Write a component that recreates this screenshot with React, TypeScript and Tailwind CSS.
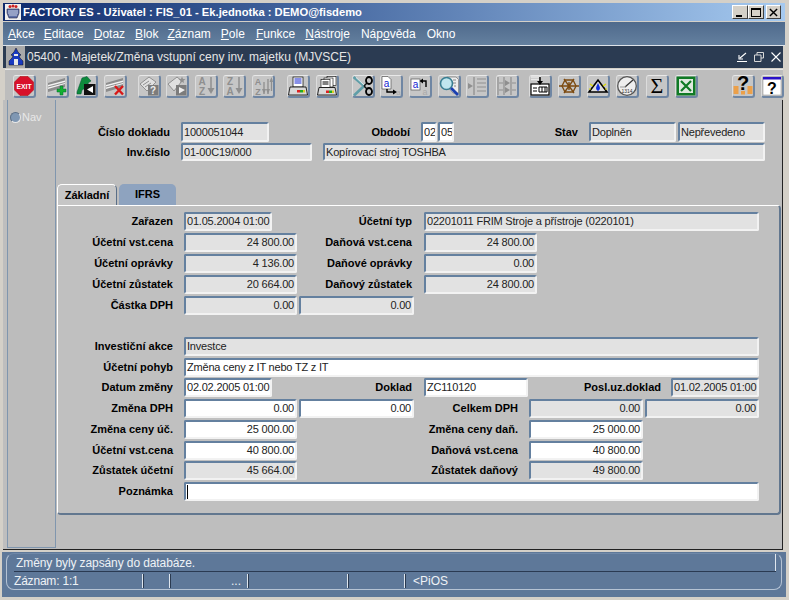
import React from "react";

const T = ({ x, y, s = 7, c = "#000", b = false, f = "Liberation Sans, sans-serif", children }: any) => (
  <text x={x} y={y} fontSize={s} fill={c} fontWeight={b ? 700 : 400} fontFamily={f} textAnchor="middle">{children}</text>
);
const G = "#8f8f8f";
const rail = (
  <g>
    <path d="M1 7 L18 2 V11 L1 16 Z" fill="#8c8c8c" />
    <path d="M1 9 L18 4.500 V8 L1 13 Z" fill="#f2f2f2" />
    <path d="M1 11 L18 6.500" stroke="#777" strokeWidth="0.8" />
  </g>
);
const icons: Record<string, React.ReactNode> = {
  exit: (<g><path d="M6 0.500 H14 L19.500 6 V14 L14 19.500 H6 L0.500 14 V6 Z" fill="#d8102a" stroke="#a00" strokeWidth="0.5" /><T x={10} y={12.500} s={6.800} c="#fff" b>EXIT</T></g>),
  add: (<g>{rail}<path d="M13 10 H16 V13 H19 V16 H16 V19 H13 V16 H10 V13 H13 Z" fill="#12b030" stroke="#063" strokeWidth="0.5" /></g>),
  tree: (<g><path d="M1 16 L6 2 L11 0.500 L15 5 L12 7 L13 10 L6 14 L5 18 L1 18 Z" fill="#0d8a3c" stroke="#053" strokeWidth="0.5" /><rect x="8" y="8" width="11.500" height="11" fill="#111" /><path d="M11 13.500 L17 10 V17 Z" fill="#fff" /></g>),
  del: (<g>{rail}<path d="M10 10 L18 18.500 M18 10 L10 18.500" stroke="#d81818" strokeWidth="2.400" /></g>),
  qdoc: (<g><path d="M1 8 L10 1 L17 6 L8 15 Z" fill="#e0e0e0" stroke={G} /><path d="M4 9 L10 5 M6 11 L12 7" stroke={G} /><rect x="9" y="9" width="10.500" height="10.500" fill="#7c7c7c" /><T x={14} y={18} s={10} c="#eee" b>?</T></g>),
  playdoc: (<g><path d="M1 8 L10 1 L15 5 L7 15 Z" fill="#e0e0e0" stroke={G} /><path d="M15 0.500 L16 3 L18.500 3 L16.500 4.800 L17 7 L15 5.800 L13 7 L13.500 4.800 L11.500 3 L14 3 Z" fill={G} /><rect x="9" y="9" width="10.500" height="10.500" fill="#7c7c7c" /><path d="M12 11 L18 14 L12 17.500 Z" fill="#eee" /></g>),
  az: (<g><T x={6} y={9} s={10} c={G} b>A</T><T x={6} y={19} s={10} c={G} b>Z</T><path d="M15 1 V13" stroke={G} strokeWidth="1.500" /><path d="M11.500 12 H18.500 L15 18 Z" fill={G} /></g>),
  za: (<g><T x={6} y={9} s={10} c={G} b>Z</T><T x={6} y={19} s={10} c={G} b>A</T><path d="M15 1 V13" stroke={G} strokeWidth="1.500" /><path d="M11.500 12 H18.500 L15 18 Z" fill={G} /></g>),
  azm: (<g><T x={5} y={9} s={9} c={G} b>A</T><T x={5} y={19} s={9} c={G} b>Z</T><path d="M11 6 V18 M15 3 V18 M18.500 3 V15" stroke={G} strokeWidth="1.300" /><path d="M9 13 H13 L11 18 Z M13 13 H17 L15 18 Z M16.500 6 H20 L18.500 1 Z" fill={G} /></g>),
  print: (<g><rect x="5" y="1" width="10" height="10" fill="#fff" stroke="#000" strokeWidth="0.700" /><path d="M6.500 3 H13.500 M6.500 5 H13.500 M6.500 7 H13.500" stroke="#1020d0" /><path d="M2 11 H18 L19.500 19 H0.500 Z" fill="#d8d8d8" stroke="#000" strokeWidth="0.800" /><rect x="9" y="14" width="3" height="2.500" fill="#d22" /><rect x="12" y="14" width="3" height="2.500" fill="#2a2" /><rect x="15" y="14" width="2" height="2.500" fill="#dc2" /></g>),
  print2: (<g><rect x="10" y="0.500" width="9" height="9" fill="#fff" stroke="#000" strokeWidth="0.600" /><rect x="7" y="2" width="9" height="9" fill="#fff" stroke="#000" strokeWidth="0.600" /><rect x="4" y="3.500" width="9" height="8" fill="#fff" stroke="#000" strokeWidth="0.600" /><path d="M5.500 6 H11.500 M5.500 8 H11.500" stroke="#000" /><path d="M2 11.500 H18 L19.500 19 H0.500 Z" fill="#d8d8d8" stroke="#000" strokeWidth="0.800" /><rect x="9" y="14.500" width="3" height="2.500" fill="#d22" /><rect x="12" y="14.500" width="3" height="2.500" fill="#2a2" /><rect x="15" y="14.500" width="2" height="2.500" fill="#dc2" /></g>),
  cut: (<g><path d="M0.500 1 L11 10 L1 19.500" fill="none" stroke="#5f9ea8" strokeWidth="2.600" /><path d="M3 1.500 L11 9" stroke="#fff" strokeWidth="0.800" /><path d="M11 10 L14 7 M11 10 L14 13" stroke="#111" strokeWidth="1.500" /><ellipse cx="16" cy="4.500" rx="3" ry="3.500" fill="none" stroke="#000" strokeWidth="1.800" /><ellipse cx="16" cy="15.500" rx="3" ry="3.500" fill="none" stroke="#000" strokeWidth="1.800" /></g>),
  copya: (<g><path d="M1 0.500 H7 L10 3.500 V13 H1 Z" fill="#fff" stroke="#555" strokeWidth="0.700" /><T x={5.500} y={11} s={10} c="#1020d0">a</T><path d="M6 13 V16 H13" fill="none" stroke="#000" strokeWidth="1.400" /><path d="M12 13.500 L16 16 L12 18.500 Z" fill="#000" /><T x={17.500} y={19} s={8} c="#aaa">a</T></g>),
  repla: (<g><rect x="1" y="3" width="9" height="11" fill="#fff" stroke="#555" strokeWidth="0.700" /><T x={5.500} y={12} s={10} c="#1020d0">a</T><path d="M16 11 V5 H12" fill="none" stroke="#000" strokeWidth="1.400" /><path d="M13 2.500 L9.500 5 L13 7.500 Z" fill="#000" /><T x={15} y={19} s={9} c="#aaa">a</T></g>),
  find: (<g><path d="M8 1 H17 L19.500 3.500 V17 H14 L8 10 Z" fill="#ededed" stroke="#777" strokeWidth="0.700" /><path d="M14 4 H17 M14 7 H17 M15 10 H17" stroke="#888" /><circle cx="7.500" cy="7.500" r="6" fill="#bfe6ee" stroke="#3a7f92" strokeWidth="1.600" /><path d="M12 12 L19 19" stroke="#1a3fb0" strokeWidth="2.800" /></g>),
  ind: (<g><path d="M7 1 V19" stroke={G} strokeWidth="1.300" /><path d="M1 7 L6 10 L1 13 Z" fill={G} /><path d="M10 3 H19 M10 7 H19 M10 11 H19 M10 15 H19" stroke={G} strokeWidth="1.200" /></g>),
  ind2: (<g><path d="M1 1 V19 M7 1 V19 M14 1 V19" stroke={G} strokeWidth="1.200" /><path d="M8 4 L13 7 L8 10 Z M8 11 L13 14 L8 17 Z" fill={G} /><path d="M2 7 H6 M2 14 H6 M15 7 H19 M15 14 H19" stroke={G} strokeWidth="1.200" /></g>),
  form: (<g><path d="M1 1 H11 M1 3.500 H9" stroke="#e8e8e8" strokeWidth="1.500" /><rect x="1" y="8" width="18" height="11" fill="#fff" stroke="#000" strokeWidth="1.200" /><path d="M3 12 H7 M3 15 H7 M9 11 H17 V16 H9 Z M12 11 V16 M15 11 V16" stroke="#000" fill="none" /><path d="M10 1 V6" stroke="#000" strokeWidth="1.500" /><path d="M7 5 H13 L10 9 Z" fill="#000" /></g>),
  wheel: (<g stroke="#7c4a10" fill="none"><path d="M6 4 H14 L17 10 L14 16 H6 L3 10 Z" strokeWidth="1.300" /><path d="M0 10 H20 M5 3 L15 17 M15 3 L5 17 M10 6 V14" strokeWidth="1.300" /></g>),
  tent: (<g><path d="M1 16 L10 4 L19 16 Z" fill="#ddd" stroke="#000" strokeWidth="1.600" /><path d="M10 7 C8 11 7 13 10 15 C13 13 12 11 10 7Z" fill="#1030e0" /><path d="M2 8 L5 10 M18 8 L15 10 M1 13 L3 13 M17 13 L19 13" stroke="#dd0" strokeWidth="1.200" /></g>),
  gauge: (<g><circle cx="10" cy="10" r="9.300" fill="#eee" stroke="#555" strokeWidth="1.300" /><path d="M8 11 L16 4" stroke="#333" strokeWidth="1.200" /><path d="M3 11 H9" stroke="#999" /><T x={10} y={16.500} s={5} c="#333">1314</T></g>),
  sigma: (<T x={10} y={17} s={22} c="#000" f="Liberation Serif, serif">Σ</T>),
  excel: (<g><rect x="0.500" y="0.500" width="19" height="19" fill="#0f7a25" /><rect x="3" y="3" width="14" height="14" fill="#dfe9df" /><path d="M5 5 L15 15 M15 5 L5 15" stroke="#0f7a25" strokeWidth="2.200" /></g>),
  help: (<g><T x={10} y={14} s={20} c="#000" b>?</T><rect x="0.500" y="10" width="5" height="8" fill="#eba04a" /><rect x="14.500" y="10" width="5" height="8" fill="#eba04a" /><rect x="8" y="15" width="4" height="3.500" fill="#eba04a" /></g>),
  help2: (<g><rect x="1" y="1" width="18" height="18" fill="#fff" stroke="#888" strokeWidth="0.500" /><rect x="1" y="1" width="18" height="2.500" fill="#2a10c8" /><T x={10} y={17.500} s={16} c="#000" b>?</T></g>),
};

const tools: [string, string][] = [
  ["exit", "ml-[8px]"], ["add", "ml-[10px]"], ["tree", "ml-[6px]"], ["del", "ml-[6px]"], ["qdoc", "ml-[11px]"], ["playdoc", "ml-[5px]"],
  ["az", "ml-[6px]"], ["za", "ml-[5px]"], ["azm", "ml-[6px]"], ["print", "ml-[12px]"], ["print2", "ml-[6px]"], ["cut", "ml-[13px]"],
  ["copya", "ml-[5px]"], ["repla", "ml-[6px]"], ["find", "ml-[6px]"], ["ind", "ml-[5px]"], ["ind2", "ml-[7px]"], ["form", "ml-[10px]"],
  ["wheel", "ml-[6px]"], ["tent", "ml-[6px]"], ["gauge", "ml-[6px]"], ["sigma", "ml-[7px]"], ["excel", "ml-[6px]"], ["help", "ml-[34px]"], ["help2", "ml-[6px]"],
];

const Tool = ({ name, cls }: { name: string; cls: string }) => (
  <div className={`${cls} w-[23px] h-[23px] shrink-0 flex items-center justify-center rounded-[3px] bg-[#c6c6c6] border border-t-[#e8e8e8] border-l-[#dcdcdc] border-r-2 border-b-2 border-r-[#6f86a3] border-b-[#6f86a3]`}>
    <svg viewBox="0 0 20 20" className="w-[20px] h-[20px] shrink-0 overflow-visible">{icons[name]}</svg>
  </div>
);

const Field = ({ w, v, white, right, h = "h-[19px]", children }: any) => (
  <div className={`${w} ${h} shrink-0 flex items-center overflow-hidden whitespace-nowrap rounded-[2px] border-t-2 border-l-2 border-t-[#64809f] border-l-[#64809f] border-r-2 border-b-2 border-r-[#f2f2f2] border-b-[#f2f2f2] text-[11px] tracking-[-0.2px] leading-none text-[#222] ${white ? "bg-white" : "bg-[#e2e2e2]"} ${right ? "justify-end pr-[1px]" : "pl-[1px]"}`}>
    {v}{children}
  </div>
);

const Label = ({ w, children }: any) => (
  <div className={`${w} shrink-0 pr-[2px] text-right font-bold text-[11px] leading-none text-black whitespace-nowrap`}>{children}</div>
);

const MenuItem = ({ u, rest, pre = "", cls }: any) => (
  <span className={cls}>{pre}<span className="underline">{u}</span>{rest}</span>
);

const Sep = ({ cls }: { cls: string }) => <div className={`${cls} w-[2px] h-[14px] bg-[#dfe6ee] border-r border-[#2b3a50] shrink-0`} />;

export default function App() {
  return (
    <div className="w-[789px] h-[600px] overflow-hidden bg-[#d4d0c8] flex flex-col pt-[3px] pl-[3px] pr-[4px] font-['Liberation_Sans',Arial,sans-serif] relative">
      {/* App title bar */}
      <div className="h-[18px] shrink-0 flex items-center bg-linear-to-r from-[#0f2a6c] to-[#a6caf0] text-white font-bold text-[11.2px] pl-[2px]">
        <svg viewBox="0 0 16 16" className="w-[16px] h-[16px] shrink-0 mr-[2px]">
          <rect width="16" height="16" fill="#f0f0f0" />
          <path d="M2 5 H14 V9 L12 14 H4 L2 9 Z" fill="#5d6fa8" stroke="#224" strokeWidth="0.600" />
          <path d="M3 7 H13 M3 9 H13 M4 11 H12" stroke="#fff" strokeWidth="0.700" />
          <circle cx="5" cy="2.500" r="1.500" fill="#c22" /><circle cx="8" cy="2" r="1.500" fill="#c22" /><circle cx="11" cy="2.500" r="1.500" fill="#c22" />
        </svg>
        <span className="whitespace-nowrap">FACTORY ES - Uživatel : FIS_01 - Ek.jednotka : DEMO@fisdemo</span>
        <div className="ml-auto flex mr-[4px]">
          {[0, 1].map((i) => (
            <div key={i} className="w-[16px] h-[14px] bg-[#d4d0c8] border border-t-white border-l-white border-r-[#404040] border-b-[#404040] flex items-center justify-center">
              {i === 0 ? <div className="w-[6px] h-[2px] bg-black mt-[7px] -ml-[2px]" /> : <div className="w-[10px] h-[9px] border border-black border-t-2" />}
            </div>
          ))}
          <div className="ml-[2px] w-[15px] h-[14px] bg-[#d4d0c8] border border-t-white border-l-white border-r-[#404040] border-b-[#404040] flex items-center justify-center">
            <svg viewBox="0 0 10 10" className="w-[9px] h-[9px]"><path d="M1 1 L9 9 M9 1 L1 9" stroke="#000" strokeWidth="1.600" /></svg>
          </div>
        </div>
      </div>
      {/* Menu */}
      <div className="mt-[1px] h-[24px] shrink-0 flex items-center bg-linear-to-b from-[#4f6a8c] to-[#64809f] border-b border-[#dde3ea] text-[12px] text-white whitespace-nowrap pl-[5px]">
        <MenuItem u="A" rest="kce" />
        <MenuItem u="E" rest="ditace" cls="ml-[9px]" />
        <MenuItem u="D" rest="otaz" cls="ml-[10px]" />
        <MenuItem u="B" rest="lok" cls="ml-[10px]" />
        <MenuItem u="Z" rest="áznam" cls="ml-[9px]" />
        <MenuItem u="P" rest="ole" cls="ml-[10px]" />
        <MenuItem u="F" rest="unkce" cls="ml-[11px]" />
        <MenuItem u="N" rest="ástroje" cls="ml-[10px]" />
        <MenuItem pre="Náp" u="o" rest="věda" cls="ml-[11px]" />
        <span className="ml-[11px]">Okno</span>
      </div>
      {/* Inner window */}
      <div className="flex-1 min-h-0 flex flex-col pr-[2px]">
        <div className="h-[22px] shrink-0 flex items-center bg-[#2b3b52] text-[#e6e6e6] text-[12px] whitespace-nowrap">
          <div className="w-[19px] h-[22px] ml-[3px] bg-[#a9a9a9] shrink-0 flex items-center justify-center">
            <svg viewBox="0 0 18 20" className="w-[18px] h-[20px]">
              <path d="M9 1 L11 5 L14 8 L12 9 L13 11 L16 14 V18 H2 V14 L5 11 L6 9 L4 8 L7 5 Z" fill="#1a3ac0" stroke="#111" strokeWidth="0.500" />
              <rect x="7" y="12" width="4" height="6" fill="#e8e8e8" /><rect x="7" y="7" width="4" height="2" fill="#e8e8e8" />
            </svg>
          </div>
          <span className="ml-[2px]">05400 - Majetek/Změna vstupní ceny inv. majetku (MJVSCE)</span>
          <div className="ml-auto flex items-center mr-[2px] gap-[7px]">
            <svg viewBox="0 0 10 10" className="w-[10px] h-[10px]"><path d="M9 1 L3 6 M2 3 V7 H6 M0 9.500 H10" stroke="#fff" fill="none" strokeWidth="1.100" /></svg>
            <svg viewBox="0 0 10 10" className="w-[10px] h-[10px]"><path d="M3 3 V0.500 H9.500 V6 H7 M0.500 3 H7 V9.500 H0.500 Z" stroke="#d8d8d8" fill="none" /></svg>
            <svg viewBox="0 0 10 10" className="w-[10px] h-[10px]"><path d="M0.500 0.500 L9.500 9.500 M9.500 0.500 L0.500 9.500" stroke="#fff" strokeWidth="1.100" /></svg>
          </div>
        </div>
        {/* Toolbar */}
        <div className="h-[31px] mt-[1px] shrink-0 flex items-start pt-[5px] bg-[#bdbdbd] border-t border-[#e6e6e6] ml-[2px]">
          {tools.map(([n, c]) => <Tool key={n} name={n} cls={c} />)}
        </div>
        {/* Body */}
        <div className="h-[450px] shrink-0 flex bg-[#bebebe] border-r border-b border-[#222] pl-[4px]">
          <div className="w-[49px] h-[448px] shrink-0 bg-[#bcbcbc] border-l border-r border-b border-[#8096ae] pt-[11px] pl-[2px] flex items-start">
            <div className="w-[11px] h-[11px] rounded-full bg-[#7f97b3] border border-[#5c6f86] border-b-[#e8e8e8] border-r-[#e8e8e8] mt-[1px]" />
            <span className="ml-[1px] text-[11px] leading-[13px] text-[#e8e8e8]">Nav</span>
          </div>
          <div className="flex-1 min-w-0 flex flex-col">
            {/* Header */}
            <div className="h-[84px] shrink-0 pt-[22px] flex flex-col">
              <div className="flex items-center">
                <Label w="w-[116px]">Číslo dokladu</Label>
                <div className="ml-[9px]"><Field w="w-[88px]" h="h-[20px]" v="1000051044" /></div>
                <Label w="w-[143px]">Období</Label>
                <div className="ml-[9px] flex gap-[1px]">
                  <Field w="w-[16px]" h="h-[20px]" white v="02" />
                  <Field w="w-[16px]" h="h-[20px]" white v="05" />
                </div>
                <Label w="w-[126px]">Stav</Label>
                <div className="ml-[9px] flex gap-[2px]">
                  <Field w="w-[87px]" h="h-[20px]" v="Doplněn" />
                  <Field w="w-[87px]" h="h-[20px]" v="Nepřevedeno" />
                </div>
              </div>
              <div className="flex items-center mt-[1px]">
                <Label w="w-[116px]">Inv.číslo</Label>
                <div className="ml-[9px]"><Field w="w-[131px]" h="h-[18px]" v="01-00C19/000" /></div>
                <div className="ml-[11px]"><Field w="w-[442px]" h="h-[18px]" v="Kopírovací stroj TOSHBA" /></div>
              </div>
            </div>
            {/* Tabs */}
            <div className="h-[21px] shrink-0 flex items-end ml-[1px]">
              <div className="w-[60px] h-[21px] rounded-t-[5px] border-t border-l border-white border-r border-r-[#5a6f88] bg-[#c6c6c6] flex items-center justify-center font-bold text-[11px] text-black">Základní</div>
              <div className="ml-[2px] w-[57px] h-[21px] rounded-t-[5px] bg-[#8ea3bf] flex items-center justify-center font-bold text-[11px] text-black">IFRS</div>
            </div>
            {/* Panel */}
            <div className="h-[310px] w-[724px] ml-[1px] shrink-0 rounded-b-[4px] rounded-tr-[4px] bg-[#c0c0c0] border-t border-l border-white border-r-2 border-b-2 border-r-[#62778f] border-b-[#62778f] pt-[6px] flex flex-col">
              {/* Top block */}
              <div className="flex flex-col gap-[2px]">
                <div className="flex items-center">
                  <Label w="w-[117px]">Zařazen</Label>
                  <div className="ml-[9px]"><Field w="w-[88px]" v="01.05.2004 01:00:" /></div>
                  <Label w="w-[142px]">Účetní typ</Label>
                  <div className="ml-[10px]"><Field w="w-[335px]" v="02201011 FRIM Stroje a přístroje (0220101)" /></div>
                </div>
                {[["Účetní vst.cena", "24 800.00", "Daňová vst.cena", "24 800.00"], ["Účetní oprávky", "4 136.00", "Daňové oprávky", "0.00"], ["Účetní zůstatek", "20 664.00", "Daňový zůstatek", "24 800.00"]].map((r) => (
                  <div key={r[0]} className="flex items-center">
                    <Label w="w-[117px]">{r[0]}</Label>
                    <div className="ml-[9px]"><Field w="w-[113px]" right v={r[1]} /></div>
                    <Label w="w-[117px]">{r[2]}</Label>
                    <div className="ml-[10px]"><Field w="w-[113px]" right v={r[3]} /></div>
                  </div>
                ))}
                <div className="flex items-center">
                  <Label w="w-[117px]">Částka DPH</Label>
                  <div className="ml-[9px] flex gap-[2px]">
                    <Field w="w-[113px]" right v="0.00" />
                    <Field w="w-[115px]" right v="0.00" />
                  </div>
                </div>
              </div>
              {/* Bottom block */}
              <div className="mt-[22px] flex flex-col">
                <div className="flex items-center">
                  <Label w="w-[117px]">Investiční akce</Label>
                  <div className="ml-[9px]"><Field w="w-[575px]" v="Investce" /></div>
                </div>
                <div className="flex items-center mt-[2px]">
                  <Label w="w-[117px]">Účetní pohyb</Label>
                  <div className="ml-[9px]"><Field w="w-[575px]" white v="Změna ceny z IT nebo TZ z IT" /></div>
                </div>
                <div className="flex items-center mt-[1px]">
                  <Label w="w-[117px]">Datum změny</Label>
                  <div className="ml-[9px]"><Field w="w-[88px]" white v="02.02.2005 01:00:" /></div>
                  <Label w="w-[142px]">Doklad</Label>
                  <div className="ml-[10px]"><Field w="w-[104px]" white v="ZC110120" /></div>
                  <Label w="w-[135px]">Posl.uz.doklad</Label>
                  <div className="ml-[8px]"><Field w="w-[88px]" v="01.02.2005 01:00:" /></div>
                </div>
                <div className="flex items-center mt-[2px]">
                  <Label w="w-[117px]">Změna DPH</Label>
                  <div className="ml-[9px] flex gap-[2px]">
                    <Field w="w-[113px]" white right v="0.00" />
                    <Field w="w-[115px]" white right v="0.00" />
                  </div>
                  <Label w="w-[106px]">Celkem DPH</Label>
                  <div className="ml-[9px] flex gap-[2px]">
                    <Field w="w-[114px]" right v="0.00" />
                    <Field w="w-[114px]" right v="0.00" />
                  </div>
                </div>
                {[["Změna ceny úč.", "25 000.00", "Změna ceny daň.", "25 000.00", true, "mt-[2px]"], ["Účetní vst.cena", "40 800.00", "Daňová vst.cena", "40 800.00", true, "mt-[2px]"], ["Zůstatek účetní", "45 664.00", "Zůstatek daňový", "49 800.00", false, "mt-[1px]"]].map((r: any) => (
                  <div key={r[0]} className={`flex items-center ${r[5]}`}>
                    <Label w="w-[117px]">{r[0]}</Label>
                    <div className="ml-[9px]"><Field w="w-[113px]" white={r[4]} right v={r[1]} /></div>
                    <Label w="w-[223px]">{r[2]}</Label>
                    <div className="ml-[9px]"><Field w="w-[114px]" white={r[4]} right v={r[3]} /></div>
                  </div>
                ))}
                <div className="flex items-center mt-[2px]">
                  <Label w="w-[117px]">Poznámka</Label>
                  <div className="ml-[9px]">
                    <Field w="w-[575px]" white><div className="w-[1px] h-[14px] bg-black" /></Field>
                  </div>
                </div>
              </div>
            </div>
          </div>
        </div>
      </div>
      {/* Status */}
      <div className="h-[45px] shrink-0 -mx-[1px] mb-[3px] bg-[#5e7899] pt-[1px] px-[4px]">
        <div className="h-[37px] rounded-[8px] border border-[#b5c3d4] border-t-[#6f88a8] text-[12px] text-[#eef2f6] leading-none flex flex-col pl-[7px]">
          <div className="h-[18px] flex items-center border-b border-[#2a3a52] mr-[5px]">
            <span className="ml-[2px] tracking-[-0.1px]">Změny byly zapsány do databáze.</span>
            <div className="ml-auto w-[1px] h-[17px] bg-[#dfe6ee]" />
          </div>
          <div className="flex-1 flex items-center">
            <span className="w-[128px] tracking-[-0.2px]">Záznam: 1:1</span>
            <Sep cls="" />
            <Sep cls="ml-[25px]" />
            <span className="ml-[60px] w-[16px]">...</span>
            <Sep cls="" />
            <Sep cls="ml-[98px]" />
            <Sep cls="ml-[55px]" />
            <span className="ml-[7px]">&lt;PiOS</span>
          </div>
        </div>
      </div>
    </div>
  );
}
